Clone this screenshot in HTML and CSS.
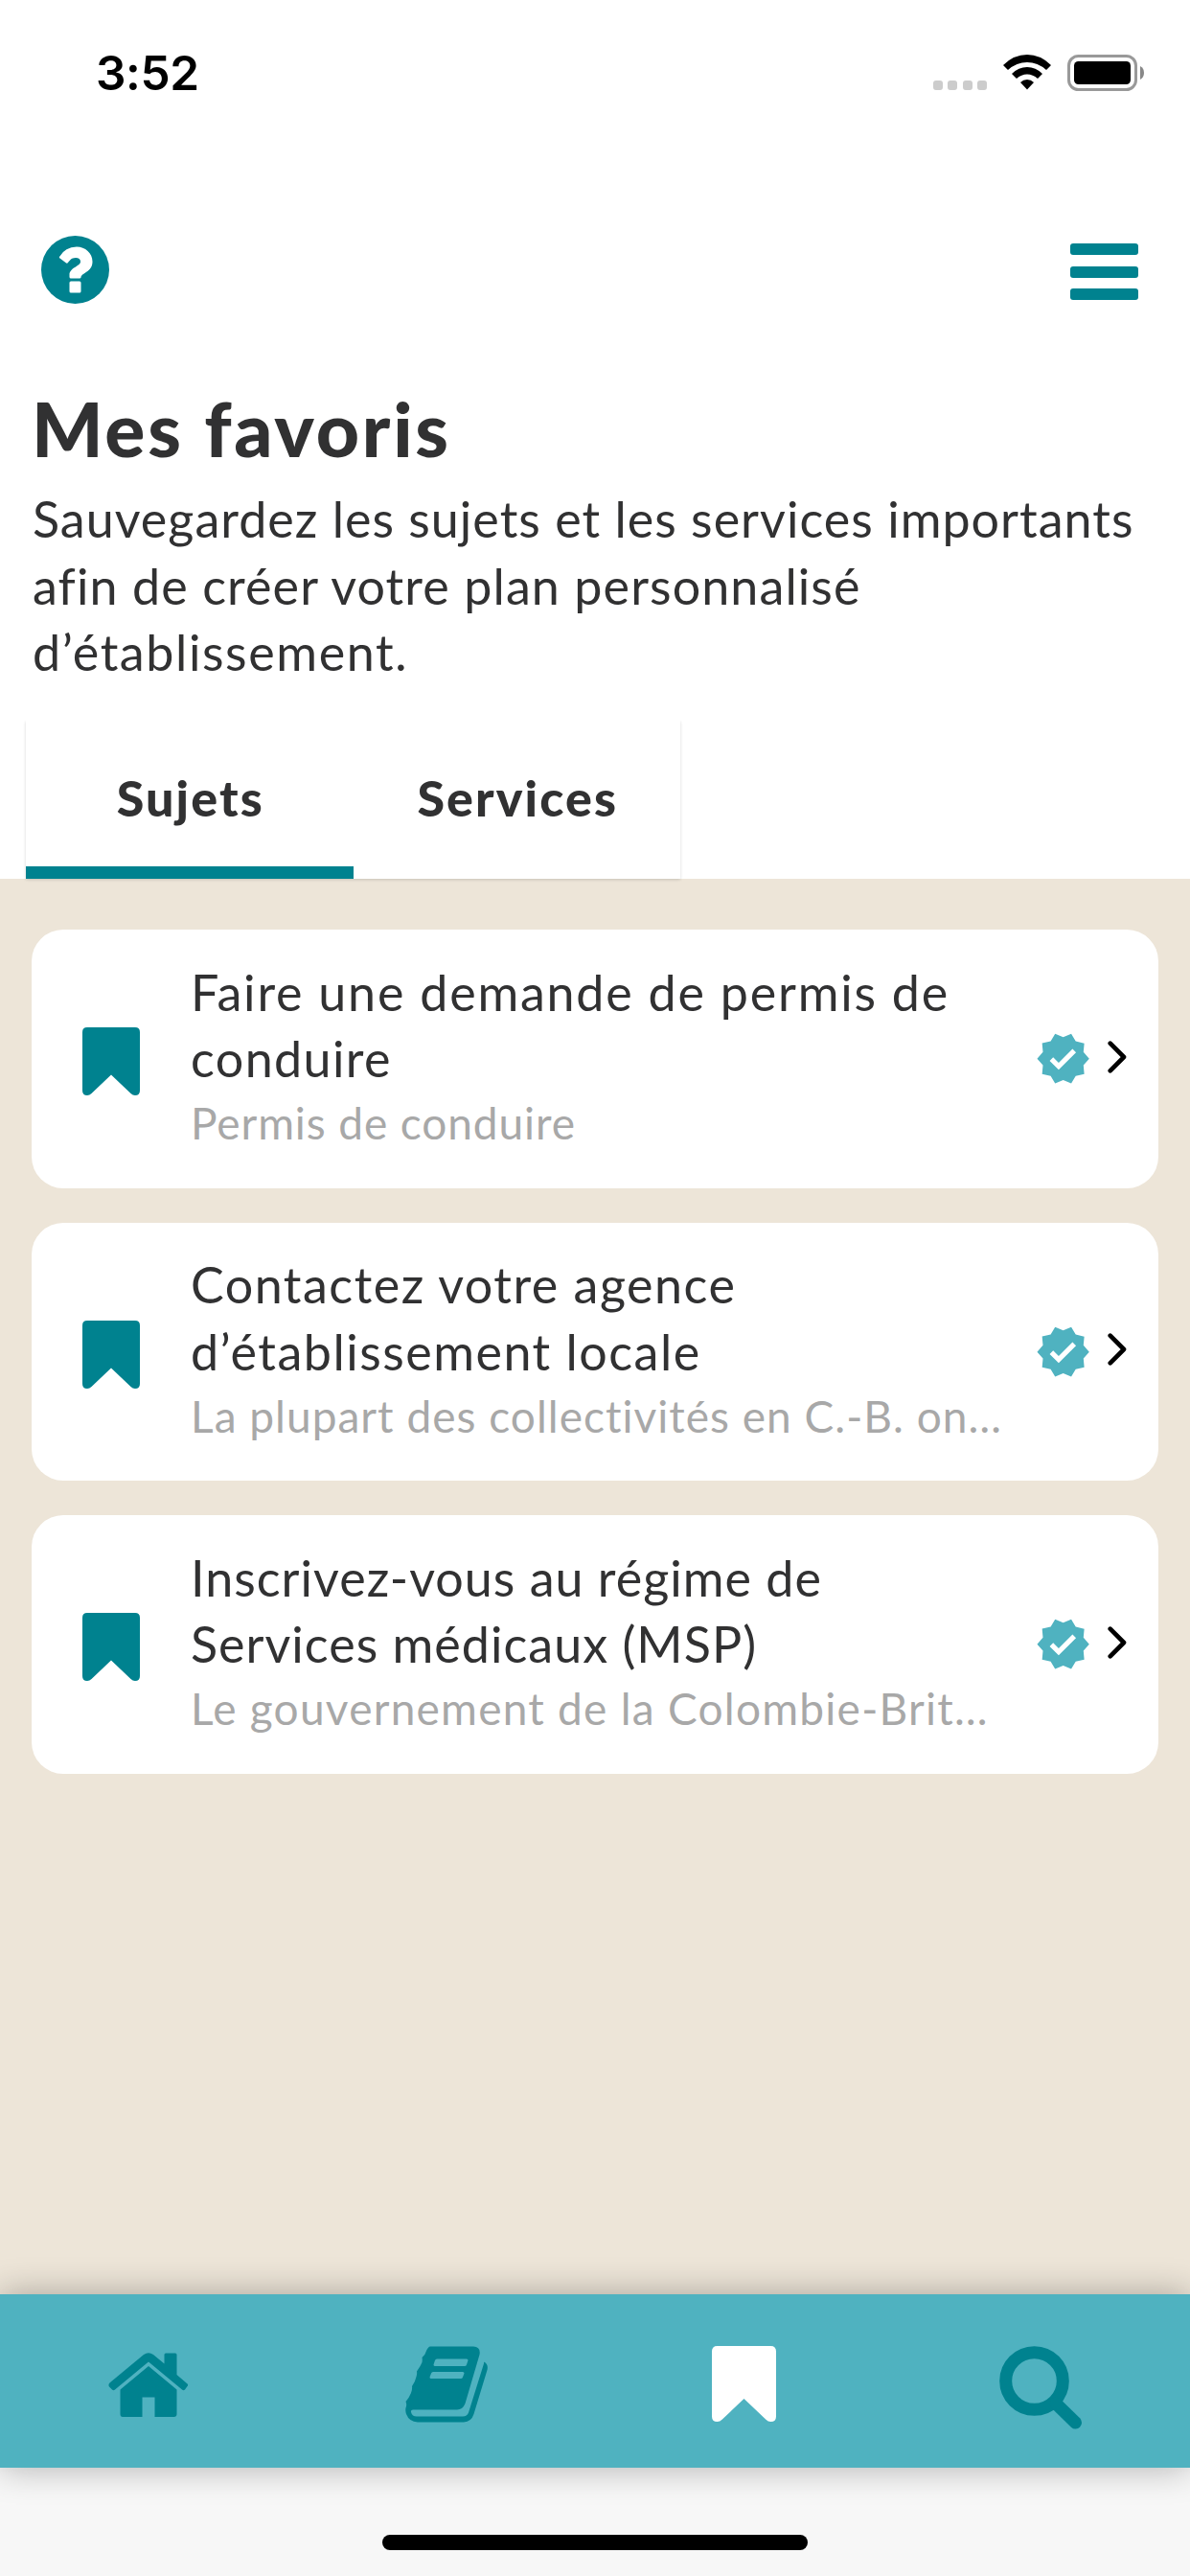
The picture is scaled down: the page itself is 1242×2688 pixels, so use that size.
FILE: index.html
```html
<!DOCTYPE html>
<html lang="fr">
<head>
<meta charset="utf-8">
<title>Mes favoris</title>
<link rel="stylesheet" href="styles.css">
</head>
<body>
<svg class="defs" width="0" height="0" aria-hidden="true">
  <symbol id="bookmark" viewBox="0 0 60 71" preserveAspectRatio="none"><path d="M5 0H55Q60 0 60 5V66Q60 71 55 71Q52.500 71 50.500 69L30 49.500L9.500 69Q7.500 71 5 71Q0 71 0 66V5Q0 0 5 0Z"/></symbol>
  <symbol id="verified" viewBox="0 0 24 24"><path d="M23 12l-2.440-2.790.340-3.690-3.610-.820-1.890-3.200L12 2.960 8.600 1.500 6.710 4.690 3.100 5.500l.340 3.700L1 12l2.440 2.790-.340 3.700 3.610.820L8.600 22.500l3.400-1.470 3.400 1.460 1.890-3.190 3.610-.820-.340-3.690L23 12zm-12.910 4.720l-3.800-3.810 1.480-1.480 2.320 2.330 5.850-5.870 1.480 1.480-7.330 7.350z"/></symbol>
  <symbol id="chevron" viewBox="0 0 20 34"><path d="M2.700 2.700L17 17L2.700 31.300"/></symbol>
</svg>
<div class="screen">
  <header class="status">
    <span class="time">3:52</span>
    <div class="status-icons">
      <div class="signal"><i></i><i></i><i></i><i></i></div>
      <svg class="wifi" viewBox="0 0 50 37"><path d="M0 11Q11 0 25 0T50 11L45 16Q36 8 25 8T5 16Z"/><path d="M9 20Q16 13 25 13T41 20L36 25Q31 20.500 25 20.500T14 25Z"/><path d="M18 29Q21 26 25 26T32 29L25 36.500Z"/></svg>
      <svg class="battery" viewBox="0 0 80 38"><rect x="1.500" y="1.500" width="70" height="35" rx="10" fill="none" stroke="#999" stroke-width="3"/><rect x="7" y="7" width="59" height="24" rx="4.500"/><path d="M76 12Q80 14 80 19T76 26Z" fill="#888"/></svg>
    </div>
  </header>
  <div class="toolbar">
    <svg class="help" viewBox="0 0 71 71"><circle cx="35.500" cy="35.500" r="35.500"/><path class="cut" d="M19 22Q25 11.500 37 11.500C46 11.500 53.500 18 53.500 27C53.500 38 42 38.500 41.500 43.500Q41.300 44.500 40 44.500H31Q29.500 44.500 29.500 43V41C29.500 33 41 32 41 27C41 24.500 39 23 36 23C31 23 30 26 27.500 28.500Q26.500 29 25.500 28L19.500 23.500Q18.500 23 19 22Z"/><rect class="cut" x="29.500" y="47.500" width="12" height="12" rx="1.500"/></svg>
    <div class="menu"><i></i><i></i><i></i></div>
  </div>
  <section class="intro">
    <h1>Mes favoris</h1>
    <p><span class="line ls-100">Sauvegardez les sujets et les services importants</span> <span class="line ls-110">afin de créer votre plan personnalisé</span> <span class="line ls-160">d’établissement.</span></p>
  </section>
  <nav class="tabs"><div class="tab active">Sujets</div><div class="tab">Services</div></nav>
  <main class="list">
    <article class="card">
      <svg class="mark"><use href="#bookmark"/></svg>
      <div class="text"><h2><span class="line ls-180">Faire une demande de permis de</span> <span class="line ls-140">conduire</span></h2><p class="ls-90">Permis de conduire</p></div>
      <svg class="verified"><use href="#verified"/></svg><svg class="chevron"><use href="#chevron"/></svg>
    </article>
    <article class="card">
      <svg class="mark"><use href="#bookmark"/></svg>
      <div class="text"><h2><span class="line ls-150">Contactez votre agence</span> <span class="line ls-150">d’établissement locale</span></h2><p class="ls-100">La plupart des collectivités en C.-B. on…</p></div>
      <svg class="verified"><use href="#verified"/></svg><svg class="chevron"><use href="#chevron"/></svg>
    </article>
    <article class="card">
      <svg class="mark"><use href="#bookmark"/></svg>
      <div class="text"><h2><span class="line ls-100">Inscrivez-vous au régime de</span> <span class="line ls-100">Services médicaux (MSP)</span></h2><p class="ls-125">Le gouvernement de la Colombie-Brit…</p></div>
      <svg class="verified"><use href="#verified"/></svg><svg class="chevron"><use href="#chevron"/></svg>
    </article>
  </main>
  <nav class="bottom">
    <svg class="home" viewBox="0 0 84 67"><path d="M2 31L37 2Q42 -1.500 47 2L58.500 11.500V2Q58.500 0.500 60 0.500H70Q71.500 0.500 71.500 2V23L82 32Q84 33.500 82.500 35L80 38.500Q78.500 40 77 38.500L42 9.500L7 38.500Q5.500 40 4 38.500L1 35.500Q-0.500 33 2 31Z"/><path d="M42 14L71.500 38.500V64Q71.500 67 68.500 67H48.500V46.500H35.500V67H15Q12.500 67 12.500 64V38.500Z"/></svg>
    <svg class="book" viewBox="0 0 86 80"><path fill-rule="evenodd" d="M26 0.500H71Q79 1 77.500 9L62.500 60Q60 66.500 54 66.500H8Q5.500 66.500 6 69Q7 73.500 12 73.500H60Q64.500 73.500 66 69.500L81.500 20Q82.500 17 82 16.500Q87 19 85.500 25L71.500 71Q69 79 61 79.500H13Q4 79 1 71Q-0.500 66 1 63Q1.500 60 0.500 58Q4 54 6 49Q7.500 45 7 42Q10.500 37 11.500 32Q12.500 29 12 26.500Q16 21 17.500 17Q18 14 17.500 12Q21 9 22 5Q24 0.500 26 0.500ZM33 13.500Q31.500 13.500 31 15L29.500 19.500Q29.500 21 31 21H62Q63.500 21 64 19.500L65.500 15Q65.500 13.500 64 13.500ZM29 27Q27.500 27 27 28.500L25.500 32.500Q25.500 34 27 34H58Q59.500 34 60 32.500L61.500 28.500Q61.500 27 60 27Z"/></svg>
    <svg class="saved"><use href="#bookmark"/></svg>
    <svg class="search" viewBox="0 0 87 87"><circle cx="36.500" cy="36.500" r="29.800"/><path d="M59 60L79.500 80"/></svg>
  </nav>
  <footer class="foot"><div class="indicator"></div></footer>
</div>
</body>
</html>
```
FILE: styles.css
```css
* { box-sizing: border-box; margin: 0; padding: 0; }
body { width: 1242px; height: 2688px; overflow: hidden; background: #fff; font-family: Lato, "Open Sans", sans-serif; color: #313132; }
svg { display: block; flex: none; }
.defs { position: absolute; }
.screen { display: flex; flex-direction: column; height: 2688px; overflow: hidden; }
.screen > * { flex-shrink: 0; }
.line { display: block; white-space: nowrap; }

/* Tracking steps */
.ls-90 { letter-spacing: .9px; }
.ls-100 { letter-spacing: 1.020px; }
.ls-110 { letter-spacing: 1.100px; }
.ls-125 { letter-spacing: 1.250px; }
.ls-140 { letter-spacing: 1.400px; }
.ls-150 { letter-spacing: 1.500px; }
.ls-160 { letter-spacing: 1.600px; }
.ls-180 { letter-spacing: 1.780px; }

.status { display: flex; justify-content: space-between; height: 150px; padding: 46px 48px 0 100px; }
.time { font: 600 49.500px/60px Inter, sans-serif; letter-spacing: -.4px; color: #000; }
.status-icons { display: flex; align-items: flex-start; padding-top: 11px; }
.signal { display: flex; gap: 5.500px; padding-top: 27px; margin-right: 17px; }
.signal i { width: 10px; height: 10px; border-radius: 3px; background: #ccc; }
.wifi { width: 50px; height: 37px; margin-right: 17px; }
.battery { width: 80px; height: 38px; }

.toolbar { display: flex; justify-content: space-between; height: 249px; padding: 96px 54px 0 43px; }
.help { width: 71px; height: 71px; fill: #00828f; }
.help .cut { fill: #fff; }
.menu { display: flex; flex-direction: column; gap: 11.700px; padding-top: 8px; }
.menu i { width: 71px; height: 12px; border-radius: 3px; background: #00828f; }

.intro { height: 353px; padding: 2px 34px 0; }
.intro h1 { margin-left: -1px; font-size: 78.500px; line-height: 92px; font-weight: 900; letter-spacing: 2.800px; padding-bottom: 14px; }
.intro p { font-size: 52px; line-height: 69.500px; }

.tabs { display: flex; align-self: flex-start; position: relative; width: 683px; height: 165px; margin-left: 27px; background: #fff; box-shadow: 0 1px 3px rgba(0, 0, 0, .16); clip-path: inset(0 -4px -4px -4px); }
.tab { flex: 1; padding: 46px 0 0 2px; text-align: center; font-size: 52px; line-height: 69px; font-weight: 900; letter-spacing: 2.100px; }
.tab.active { border-bottom: 13px solid #00828f; }

.list { flex: 1; display: flex; flex-direction: column; gap: 36px; padding: 53px 33px 0; background: #ede5d8; }
.card { display: flex; align-items: center; height: 269.500px; padding: 0 33px 0 53px; border-radius: 33px; background: #fff; }
.mark { width: 60px; height: 71px; margin-top: 6px; fill: #00828f; }
.text { flex: 1; min-width: 0; align-self: flex-start; padding: 30.500px 0 0 53px; }
.text h2 { font-size: 52px; line-height: 69.500px; font-weight: 400; }
.text p { font-size: 46px; line-height: 60px; margin-top: 2.500px; color: #a8a8a8; white-space: nowrap; }
.verified { width: 59.300px; height: 59.300px; fill: #4fb2c0; margin-right: 17px; }
.chevron { width: 20px; height: 34px; margin-top: -4px; fill: none; stroke: #000; stroke-width: 4.600; stroke-linecap: round; stroke-linejoin: round; }

.bottom { position: relative; display: grid; grid-template-columns: repeat(4, 1fr); justify-items: center; height: 181px; background: #4fb2c0; box-shadow: 0 0 34px rgba(0, 0, 0, .3); fill: #00828f; }
.home { width: 84px; height: 67px; margin-top: 61px; }
.book { width: 86px; height: 80px; margin-top: 54px; }
.saved { width: 67px; height: 79px; margin-top: 54px; fill: #fff; }
.search { width: 87px; height: 87px; margin-top: 54px; fill: none; stroke: #00828f; stroke-width: 13; stroke-linecap: round; }
.foot { height: 113px; padding-top: 70px; background: #f7f7f7; }
.indicator { width: 444px; height: 16px; margin: 0 auto; border-radius: 8px; background: #000; }
```
